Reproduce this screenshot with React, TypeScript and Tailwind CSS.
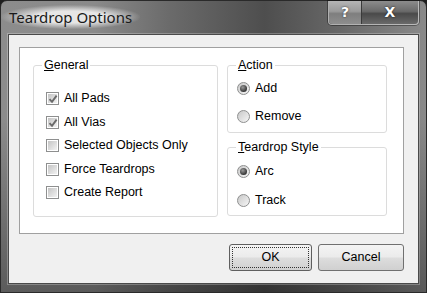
import type { ReactNode } from "react";

const ui = "font-['Liberation_Sans',Arial,sans-serif] text-[12.5px] text-black";

function CheckBox({ label, checked }: { label: string; checked?: boolean }) {
  return (
    <div className="flex h-[23.5px] items-center gap-[5px]">
      <span className="relative flex h-[13px] w-[13px] items-center justify-center border border-[#8e8f8f] bg-white">
        <span className="h-[9px] w-[9px] bg-[linear-gradient(135deg,#c4c4c4,#f2f2f2)]" />
        {checked && (
          <svg
            className="absolute left-[1px] top-[1px]"
            width="10"
            height="10"
            viewBox="0 0 10 10"
          >
            <path
              d="M1.5 5.2 L4 7.8 L8.6 1.6"
              fill="none"
              stroke="#6a6a6a"
              strokeWidth="1.9"
            />
          </svg>
        )}
      </span>
      <span>{label}</span>
    </div>
  );
}

function Radio({
  label,
  checked,
  h,
}: {
  label: string;
  checked?: boolean;
  h: string;
}) {
  return (
    <div className={`flex items-center gap-[5px] ${h}`}>
      <span className="flex h-[13px] w-[13px] items-center justify-center rounded-full border border-[#8e8f8f] bg-[linear-gradient(135deg,#c8c8c8,#f6f6f6)]">
        {checked && (
          <span className="h-[7px] w-[7px] rounded-full bg-[radial-gradient(circle_at_40%_35%,#9a9a9a,#2e2e2e_75%)]" />
        )}
      </span>
      <span>{label}</span>
    </div>
  );
}

function Group({
  title,
  className,
  inner,
  children,
}: {
  title: ReactNode;
  className: string;
  inner: string;
  children: ReactNode;
}) {
  return (
    <fieldset className={`rounded-[3px] border border-[#dcdcdc] ${className}`}>
      <legend className="ml-[8px] px-[2px] leading-[14px]">{title}</legend>
      <div className={inner}>{children}</div>
    </fieldset>
  );
}

function Btn({ label, primary }: { label: string; primary?: boolean }) {
  return (
    <button
      className={`flex h-[27px] items-center justify-center rounded-[3px] border bg-[linear-gradient(180deg,#f4f4f4_0%,#ebebeb_48%,#dddddd_52%,#d0d0d0_100%)] ${
        primary ? "w-[83px] border-[#5f5f5f] p-[2px]" : "w-[86px] border-[#707070]"
      }`}
    >
      {primary ? (
        <span className="flex h-full w-full items-center justify-center border border-dotted border-[#333]">
          {label}
        </span>
      ) : (
        label
      )}
    </button>
  );
}

export default function App() {
  return (
    <div className="h-[293px] w-[427px] overflow-hidden bg-[#1e1e1e]">
      <div className="flex h-[293px] w-[427px] flex-col rounded-t-[7px] border border-[#2a2a2a] bg-[linear-gradient(180deg,rgba(0,0,0,0)_0%,rgba(0,0,0,0)_40%,rgba(0,0,0,0.35)_100%),linear-gradient(90deg,#8c8c8c_0%,#8a8a8a_22%,#6a6a6a_40%,#4e4e4e_62%,#686868_80%,#8a8a8a_100%)]">
        <div className="flex h-[33px] shrink-0 items-start justify-between">
          <span className="mt-[4px] rounded-[14px] bg-[radial-gradient(ellipse_at_center,rgba(235,235,235,0.95)_35%,rgba(235,235,235,0)_72%)] px-[8px] py-[2px] font-['Noto_Sans',sans-serif] text-[15px] leading-[20px] text-[#1a1a1a]">
            Teardrop Options
          </span>
          <div className="mr-[7px] flex h-[24px] rounded-b-[4px] border border-t-0 border-[#d0d0d0]/70 shadow-[0_0_0_1px_rgba(0,0,0,0.35)]">
            <div className="flex w-[33px] items-center justify-center rounded-bl-[4px] border-r border-[#3a3a3a] bg-[linear-gradient(180deg,#b5b5b5_0%,#9a9a9a_45%,#7e7e7e_55%,#8e8e8e_100%)] font-['DejaVu_Sans',sans-serif] text-[14px] font-bold text-white [text-shadow:0_0_2px_#222]">
              ?
            </div>
            <div className="flex w-[56px] items-center justify-center rounded-br-[4px] bg-[linear-gradient(180deg,#8c8c8c_0%,#6a6a6a_45%,#4a4a4a_55%,#6a6a6a_100%)] font-['DejaVu_Sans',sans-serif] text-[14px] font-bold text-white [text-shadow:0_0_2px_#111]">
              X
            </div>
          </div>
        </div>
        <div className="ml-[7px] h-[250px] w-[411px] border border-[#4a4a4a] bg-[#f0f0f0] shadow-[0_0_0_1px_rgba(255,255,255,0.25)]">
          <div className={`ml-[10px] mt-[12px] flex h-[187px] w-[385px] gap-[9px] border border-[#a0a0a0] bg-white pl-[13px] pt-[10px] ${ui}`}>
            <Group
              title={<><u>G</u>eneral</>}
              className="h-[159px] w-[185px]"
              inner="pl-[12px] pt-[15px]"
            >
              <CheckBox label="All Pads" checked />
              <CheckBox label="All Vias" checked />
              <CheckBox label="Selected Objects Only" />
              <CheckBox label="Force Teardrops" />
              <CheckBox label="Create Report" />
            </Group>
            <div className="flex flex-col gap-[7px]">
              <Group
                title={<><u>A</u>ction</>}
                className="h-[75px] w-[160px]"
                inner="pl-[9px] pt-[2px]"
              >
                <Radio label="Add" checked h="h-[28px]" />
                <Radio label="Remove" h="h-[28px]" />
              </Group>
              <Group
                title={<><u>T</u>eardrop Style</>}
                className="h-[76px] w-[160px]"
                inner="pl-[9px] pt-[3px]"
              >
                <Radio label="Arc" checked h="h-[29px]" />
                <Radio label="Track" h="h-[29px]" />
              </Group>
            </div>
          </div>
          <div className={`mr-[14px] mt-[10px] flex justify-end gap-[6px] ${ui}`}>
            <Btn label="OK" primary />
            <Btn label="Cancel" />
          </div>
        </div>
      </div>
    </div>
  );
}
